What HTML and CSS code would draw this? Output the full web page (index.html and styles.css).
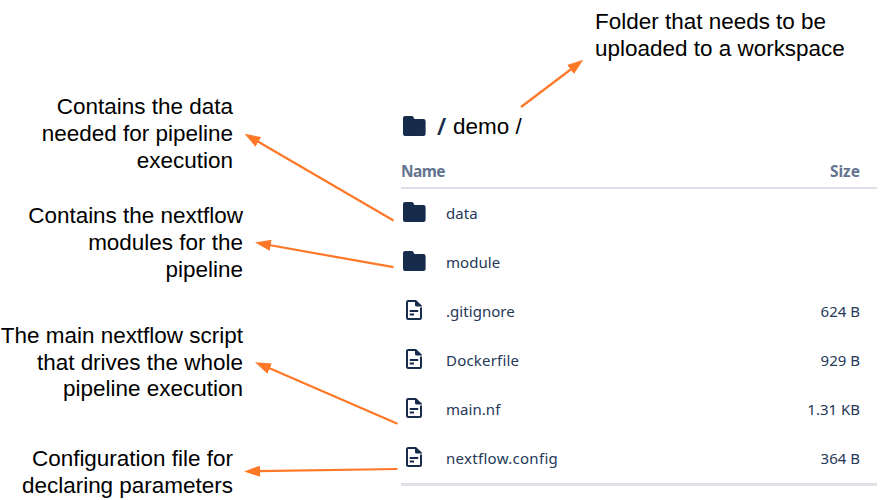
FILE: index.html
```
<!DOCTYPE html>
<html lang="en">
<head>
<meta charset="utf-8">
<title>Pipeline folder structure</title>
<link rel="stylesheet" href="styles.css">
</head>
<body>
<svg class="defs" width="0" height="0" aria-hidden="true">
  <symbol id="folder" viewBox="0 0 24 22"><path d="M3 1H9.800Q10.800 1 11.400 2L12.400 4H21.400Q23.600 4 23.600 6.200V19Q23.600 21 21.400 21H3Q1 21 1 19V3Q1 1 3 1Z" fill="#172b4d"/></symbol>
  <symbol id="file" viewBox="0 0 18 22"><path d="M10.500 2H3.200Q2 2 2 3.200V18.800Q2 20 3.200 20H14.800Q16 20 16 18.800V8.500" fill="none" stroke="#172b4d" stroke-width="2"/><path d="M10 1H11L17 6.800V7.500H11.500Q10 7.500 10 6Z" fill="#172b4d"/><path d="M4.700 12H13.200M4.700 15.500H9" fill="none" stroke="#172b4d" stroke-width="1.900"/></symbol>
</svg>
<main class="figure">
  <aside class="notes">
    <p class="note note-data">Contains the data<br>needed for pipeline<br>execution</p>
    <p class="note note-module">Contains the nextflow<br>modules for the<br>pipeline</p>
    <p class="note note-main">The main nextflow script<br>that drives the whole<br>pipeline execution</p>
    <p class="note note-config">Configuration file for<br>declaring parameters</p>
  </aside>
  <section class="browser">
    <p class="note note-folder">Folder that needs to be<br>uploaded to a workspace</p>
    <div class="path"><svg class="folder"><use href="#folder"/></svg><span class="root">/</span><span class="crumb">demo /</span></div>
    <div class="head"><span>Name</span><span>Size</span></div>
    <div class="rows">
      <div class="row"><svg class="folder"><use href="#folder"/></svg><span class="name">data</span></div>
      <div class="row"><svg class="folder"><use href="#folder"/></svg><span class="name">module</span></div>
      <div class="row"><svg class="file"><use href="#file"/></svg><span class="name">.gitignore</span><span class="size">624 B</span></div>
      <div class="row"><svg class="file"><use href="#file"/></svg><span class="name name-wide">Dockerfile</span><span class="size">929 B</span></div>
      <div class="row"><svg class="file"><use href="#file"/></svg><span class="name">main.nf</span><span class="size">1.31 KB</span></div>
      <div class="row"><svg class="file"><use href="#file"/></svg><span class="name name-wider">nextflow.config</span><span class="size">364 B</span></div>
    </div>
  </section>
  <svg class="arrows" viewBox="0 0 886 500">
    <defs><marker id="tip" markerUnits="userSpaceOnUse" markerWidth="16" markerHeight="12" refX="16" refY="6" orient="auto"><path d="M0 .4L16 6L0 11.6Z" fill="#ff7828"/></marker></defs>
    <g fill="none" stroke="#ff7828" stroke-width="2.2">
      <path d="M521 107L572 68.5"/><path d="M393.500 220.500L257 141"/><path d="M393.500 267.200L269 245"/><path d="M397.500 423.800L269 368"/><path d="M397.500 469L258 471.200"/>
    </g>
    <g stroke="none">
      <path d="M521 107L583.300 59.800" marker-end="url(#tip)"/><path d="M393.500 220.500L244.500 133.800" marker-end="url(#tip)"/><path d="M393.500 267.200L255 242.500" marker-end="url(#tip)"/><path d="M397.500 423.800L255 362.200" marker-end="url(#tip)"/><path d="M397.500 469L244 471.500" marker-end="url(#tip)"/>
    </g>
  </svg>
</main>
</body>
</html>
```
FILE: styles.css
```
* { box-sizing: border-box; }
body { margin: 0; background: #fff; }
.defs { position: absolute; }
.figure {
  position: relative;
  display: grid;
  grid-template-columns: 401px 476px;
  width: 886px;
  height: 500px;
  overflow: hidden;
}
.notes { padding-top: 93px; width: 243px; }
.note {
  margin: 0;
  font: 22.47px/27px "Liberation Sans", Arial, sans-serif;
  color: #000;
  white-space: nowrap;
}
.notes .note { text-align: right; }
.notes .note-data { padding-right: 10px; }
.notes .note-module { margin-top: 28px; }
.notes .note-main { margin: 40px 0 0 -10px; line-height: 26.7px; }
.notes .note-config { margin-top: 42px; padding-right: 10px; }
.browser { font-family: "Noto Sans", sans-serif; color: #253858; }
.note-folder { height: 102px; padding: 8px 0 0 194px; }
.path {
  display: flex;
  align-items: center;
  height: 50px;
  padding: 0 0 2px 1px;
}
.folder { width: 24px; height: 22px; flex: none; }
.root {
  margin-left: 11px;
  width: 9px;
  font: 600 23px/27px "Noto Sans", sans-serif;
  color: #172b4d;
}
.crumb {
  margin-left: 7px;
  font: 22.47px/27px "Liberation Sans", Arial, sans-serif;
  color: #000;
}
.head {
  display: flex;
  justify-content: space-between;
  height: 37px;
  padding: 8px 17px 0 0;
  border-bottom: 2px solid #dfe1e9;
  font-size: 15.5px;
  line-height: 22px;
  font-weight: 700;
  letter-spacing: -.6px;
  color: #64748f;
}
.head span:last-child { letter-spacing: 0; }
.rows { border-bottom: 3px solid #dfe1e6; }
.row {
  display: flex;
  align-items: center;
  height: 49px;
  padding: 0 17px 2px 1px;
  font-size: 15px;
}
.row svg { margin-top: -2px; }
.file { width: 18px; height: 22px; flex: none; margin: 0 3px 0 3px; }
.name { margin-left: 20px; letter-spacing: .05px; }
.name-wide { letter-spacing: .2px; }
.name-wider { letter-spacing: .3px; }
.size { margin-left: auto; }
.arrows { position: absolute; inset: 0; width: 886px; height: 500px; pointer-events: none; }
```
